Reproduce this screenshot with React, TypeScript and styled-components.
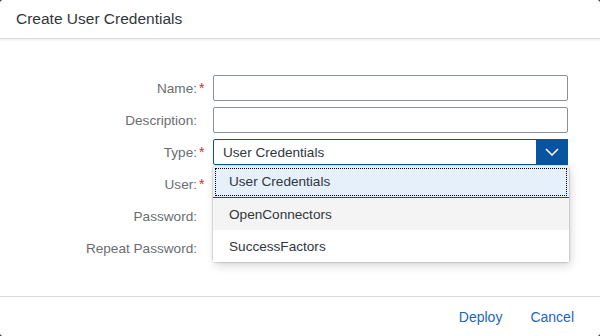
import React from "react";
import styled, { createGlobalStyle } from "styled-components";

const GlobalStyle = createGlobalStyle`
  html, body {
    margin: 0;
    padding: 0;
    background: #2b2b2b;
  }
  body {
    font-family: "Liberation Sans", Arial, sans-serif;
  }
`;

const Dialog = styled.div`
  width: 600px;
  height: 336px;
  background: #fff;
  border-radius: 3px;
  overflow: hidden;
  display: flex;
  flex-direction: column;
  color: #32363a;
`;

const Header = styled.header`
  height: 38px;
  flex: none;
  display: flex;
  align-items: center;
  padding: 0 16px;
  border-bottom: 1px solid #dcdcdc;
  box-shadow: 0 1px 2px rgba(0, 0, 0, 0.08);
  font-size: 15.5px;
  color: #32363a;
  position: relative;
  z-index: 1;
`;

const Body = styled.main`
  flex: 1;
  padding-top: 36px;
`;

const Form = styled.div`
  display: grid;
  grid-template-columns: 207px 355px;
  column-gap: 6px;
  row-gap: 6px;
  grid-auto-rows: 26px;
`;

const Label = styled.label`
  display: flex;
  justify-content: flex-end;
  align-items: center;
  font-size: 13.6px;
  color: #6a6d70;
  white-space: nowrap;
`;

const Star = styled.span`
  width: 8px;
  margin-left: 2px;
  color: #d42a32;
  font-size: 14px;
`;

const Input = styled.div`
  box-sizing: border-box;
  height: 26px;
  border: 1px solid #89919a;
  border-radius: 2px;
  background: #fff;
`;

const SelectWrap = styled.div`
  position: relative;
  z-index: 2;
`;

const Select = styled.div`
  box-sizing: border-box;
  height: 26px;
  border: 1px solid #0854a0;
  border-radius: 2px;
  display: flex;
  align-items: center;
  font-size: 13.6px;
  color: #32363a;
  padding-left: 9px;
  background: #fff;
`;

const SelectText = styled.span`
  flex: 1;
`;

const ArrowButton = styled.span`
  width: 32px;
  height: 26px;
  margin: -1px -1px -1px 0;
  background: #0854a0;
  display: flex;
  align-items: center;
  justify-content: center;
`;

const Popover = styled.ul`
  position: absolute;
  top: 100%;
  left: 0;
  right: -1px;
  margin: 1px 0 0;
  padding: 0;
  list-style: none;
  background: #fff;
  box-shadow: 0 0 2px rgba(0, 0, 0, 0.45), 2px 4px 10px rgba(0, 0, 0, 0.15);
  border-radius: 2px;
`;

const Item = styled.li<{ $selected?: boolean; $hover?: boolean }>`
  box-sizing: border-box;
  height: 32px;
  display: flex;
  align-items: center;
  padding-left: 16px;
  font-size: 13.6px;
  color: #32363a;
  background: ${(p) => (p.$selected ? "#e5f0fa" : p.$hover ? "#f4f4f4" : "#fff")};
  border-bottom: ${(p) => (p.$selected ? "1px solid #0854a0" : "none")};
  outline: ${(p) => (p.$selected ? "1px dotted #000" : "none")};
  outline-offset: -3px;
`;

const Footer = styled.footer`
  height: 39px;
  flex: none;
  border-top: 1px solid #d9d9d9;
  display: flex;
  justify-content: flex-end;
  align-items: center;
  gap: 28px;
  padding-right: 26px;
`;

const TextButton = styled.button`
  border: none;
  background: none;
  padding: 0;
  font-family: "Liberation Sans", Arial, sans-serif;
  font-size: 14px;
  color: #1d66b8;
  cursor: pointer;
`;

const fields = [
  { label: "Name:", required: true },
  { label: "Description:", required: false },
  { label: "Type:", required: true, select: true },
  { label: "User:", required: true },
  { label: "Password:", required: false },
  { label: "Repeat Password:", required: false },
];

const options = ["User Credentials", "OpenConnectors", "SuccessFactors"];

export default function App() {
  return (
    <>
      <GlobalStyle />
      <Dialog>
        <Header>Create User Credentials</Header>
        <Body>
          <Form>
            {fields.map((f) => (
              <React.Fragment key={f.label}>
                <Label>
                  {f.label}
                  <Star>{f.required ? "*" : ""}</Star>
                </Label>
                {f.select ? (
                  <SelectWrap>
                    <Select>
                      <SelectText>User Credentials</SelectText>
                      <ArrowButton>
                        <svg width="14" height="8" viewBox="0 0 14 8">
                          <polyline
                            points="1,1 7,7 13,1"
                            fill="none"
                            stroke="#fff"
                            strokeWidth="1.5"
                          />
                        </svg>
                      </ArrowButton>
                    </Select>
                    <Popover>
                      {options.map((o, i) => (
                        <Item key={o} $selected={i === 0} $hover={i === 1}>
                          {o}
                        </Item>
                      ))}
                    </Popover>
                  </SelectWrap>
                ) : (
                  <Input />
                )}
              </React.Fragment>
            ))}
          </Form>
        </Body>
        <Footer>
          <TextButton>Deploy</TextButton>
          <TextButton>Cancel</TextButton>
        </Footer>
      </Dialog>
    </>
  );
}
